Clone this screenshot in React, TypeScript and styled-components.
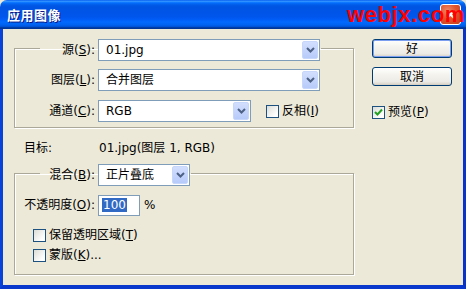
import React, { ReactElement, ReactNode } from 'react'
import styled, { createGlobalStyle } from 'styled-components'

const FONT = `'DejaVu Sans', 'Noto Sans CJK SC', sans-serif`

const GlobalStyle = createGlobalStyle`
  html, body {
    margin: 0;
    padding: 0;
    width: 466px;
    height: 289px;
    overflow: hidden;
    background: #ece9d8;
  }
`

const Window = styled.div`
  width: 466px;
  height: 289px;
  display: flex;
  flex-direction: column;
  font-family: ${FONT};
  font-size: 12px;
  color: #000;
`

const TitleBar = styled.div`
  position: relative;
  height: 29px;
  flex: none;
  display: flex;
  align-items: center;
  justify-content: space-between;
  padding: 0 5px 0 7px;
  box-sizing: border-box;
  border-radius: 7px 7px 0 0;
  background: linear-gradient(
    to bottom,
    #0058ee 0%,
    #3593ff 4%,
    #288eff 6%,
    #127dff 8%,
    #036ffc 10%,
    #0262ee 14%,
    #0057e5 20%,
    #0054e3 24%,
    #0055eb 56%,
    #005bf5 66%,
    #026afe 76%,
    #0062ef 86%,
    #0052d6 92%,
    #0040ab 94%,
    #003092 100%
  );
`

const TitleText = styled.span`
  color: #fff;
  font-family: 'Noto Sans CJK SC', sans-serif;
  font-weight: 700;
  font-size: 13px;
  line-height: 15px;
  text-shadow: 1px 1px 0 #0a1883;
  letter-spacing: 0.5px;
`

const CloseButton = styled.div`
  width: 21px;
  height: 21px;
  box-sizing: border-box;
  border: 1px solid #fff;
  border-radius: 3px;
  background: radial-gradient(circle at 35% 30%, #f08a6a 0%, #e2552c 45%, #c3401d 100%);
  display: flex;
  align-items: center;
  justify-content: center;
`

// site watermark stamped over the title bar
const Watermark = styled.span`
  position: absolute;
  left: 347px;
  top: 3px;
  color: #ff0000;
  font-family: 'Liberation Sans', Arial, sans-serif;
  font-weight: 700;
  font-size: 22px;
  line-height: 24px;
  letter-spacing: 0.6px;
`

const Frame = styled.div`
  flex: 1;
  display: flex;
  border-left: 3px solid #0842d8;
  border-right: 3px solid #0832c8;
  border-bottom: 4px solid #0838cc;
  background: #ece9d8;
  padding: 10px 11px 0 11px;
  gap: 18px;
`

const Main = styled.div`
  width: 340px;
  display: flex;
  flex-direction: column;
`

const Side = styled.div`
  width: 80px;
  display: flex;
  flex-direction: column;
`

const Group = styled.fieldset<{ $bottom: number }>`
  margin: 0;
  min-width: 0;
  padding: 0 0 ${(p) => p.$bottom}px 9px;
  border: 1px solid #aca899;
  box-shadow: inset 1px 1px 0 #fff, 1px 1px 0 #fff;
  display: flex;
  flex-direction: column;
`

const Legend = styled.legend<{ $indent: number }>`
  margin-left: ${(p) => p.$indent}px;
  padding: 0 1px 0 0;
  height: 18px;
  display: flex;
  align-items: flex-start;
`

const Row = styled.div<{ $indent?: number; $top: number }>`
  display: flex;
  align-items: center;
  padding-left: ${(p) => p.$indent || 0}px;
  margin-top: ${(p) => p.$top}px;
  height: 22px;
`

const Label = styled.span<{ $w: number }>`
  width: ${(p) => p.$w}px;
  margin-right: 3px;
  text-align: right;
  white-space: nowrap;
  line-height: 22px;
  flex: none;
`

const SelectBox = styled.div<{ $w: number }>`
  width: ${(p) => p.$w}px;
  height: 22px;
  box-sizing: border-box;
  border: 1px solid #7f9db9;
  background: #fff;
  display: flex;
  padding: 1px;
  flex: none;
`

const SelectText = styled.span`
  flex: 1;
  padding-left: 6px;
  line-height: 18px;
  white-space: nowrap;
  overflow: hidden;
`

const ArrowBox = styled.span`
  width: 16px;
  box-sizing: border-box;
  border: 1px solid #c7d6fb;
  border-radius: 2px;
  background: linear-gradient(to bottom, #d2defd, #b7cbfa);
  display: flex;
  align-items: center;
  justify-content: center;
`

const CheckWrap = styled.label<{ $left?: number; $top?: number }>`
  display: flex;
  align-items: center;
  margin-left: ${(p) => p.$left || 0}px;
  margin-top: ${(p) => p.$top || 0}px;
  height: 14px;
  line-height: 14px;
  white-space: nowrap;
`

const CheckBox = styled.span`
  width: 13px;
  height: 13px;
  box-sizing: border-box;
  border: 1px solid #1c5180;
  background: linear-gradient(135deg, #dcdcd7 0%, #fff 80%);
  margin-right: 3px;
  display: flex;
  align-items: center;
  justify-content: center;
  flex: none;
`

const TargetRow = styled.div`
  display: flex;
  padding-left: 10px;
  margin: 13px 0 9px;
  line-height: 14px;
`

const TargetLabel = styled.span`
  width: 75px;
`

const NumberInput = styled.div`
  width: 42px;
  height: 21px;
  box-sizing: border-box;
  border: 1px solid #7f9db9;
  background: #fff;
  padding: 2px 0 0 3px;
  flex: none;
`

const Selected = styled.span`
  display: inline-block;
  background: #316ac5;
  color: #fff;
  line-height: 14px;
  padding: 0 1px;
`

const Percent = styled.span`
  margin-left: 4px;
`

const Button = styled.div<{ $default?: boolean; $top?: number }>`
  height: 19px;
  margin-top: ${(p) => p.$top || 0}px;
  box-sizing: border-box;
  border: 1px solid #003c74;
  border-radius: 3px;
  background: linear-gradient(to bottom, #fff 0%, #f4f3ee 40%, #ecebe6 80%, #d6d0c5 100%);
  box-shadow: ${(p) =>
    p.$default ? 'inset 0 0 0 1px #7b9ef0' : 'inset 0 -1px 0 #d6d0c5'};
  display: flex;
  align-items: center;
  justify-content: center;
  line-height: 14px;
`

const Check = ({
  children,
  checked,
  left,
  top,
}: {
  children: ReactNode
  checked?: boolean
  left?: number
  top?: number
}): ReactElement => (
  <CheckWrap $left={left} $top={top}>
    <CheckBox>
      {checked && (
        <svg width="9" height="9" viewBox="0 0 9 9">
          <path d="M1 4 L3.5 6.5 L8 1.5" stroke="#21a121" strokeWidth="2" fill="none" />
        </svg>
      )}
    </CheckBox>
    {children}
  </CheckWrap>
)

const Select = ({ w, children }: { w: number; children: ReactNode }): ReactElement => (
  <SelectBox $w={w}>
    <SelectText>{children}</SelectText>
    <ArrowBox>
      <svg width="9" height="6" viewBox="0 0 9 6">
        <path d="M1 1 L4.5 4.5 L8 1" stroke="#4d6185" strokeWidth="2" fill="none" />
      </svg>
    </ArrowBox>
  </SelectBox>
)

const App = (): ReactElement => {
  return (
    <Window>
      <GlobalStyle />
      <TitleBar>
        <TitleText>应用图像</TitleText>
        <CloseButton>
          <svg width="11" height="11" viewBox="0 0 11 11">
            <path d="M2 2 L9 9 M9 2 L2 9" stroke="#fff" strokeWidth="2" />
          </svg>
        </CloseButton>
        <Watermark>webjx.com</Watermark>
      </TitleBar>

      <Frame>
        <Main>
          <Group $bottom={5}>
            <Legend $indent={16}>
              <Label $w={55}>
                源(<u>S</u>):
              </Label>
              <Select w={222}>01.jpg</Select>
            </Legend>
            <Row $indent={16} $top={12}>
              <Label $w={55}>
                图层(<u>L</u>):
              </Label>
              <Select w={222}>合并图层</Select>
            </Row>
            <Row $indent={16} $top={9}>
              <Label $w={55}>
                通道(<u>C</u>):
              </Label>
              <Select w={153}>RGB</Select>
              <Check left={15}>
                反相(<u>I</u>)
              </Check>
            </Row>
          </Group>

          <TargetRow>
            <TargetLabel>目标:</TargetLabel>
            <span>01.jpg(图层 1, RGB)</span>
          </TargetRow>

          <Group $bottom={12}>
            <Legend $indent={16}>
              <Label $w={55}>
                混合(<u>B</u>):
              </Label>
              <Select w={92}>正片叠底</Select>
            </Legend>
            <Row $top={12}>
              <Label $w={71}>
                不透明度(<u>O</u>):
              </Label>
              <NumberInput>
                <Selected>100</Selected>
              </NumberInput>
              <Percent>%</Percent>
            </Row>
            <Check left={9} top={12}>
              保留透明区域(<u>T</u>)
            </Check>
            <Check left={9} top={6}>
              蒙版(<u>K</u>)...
            </Check>
          </Group>
        </Main>

        <Side>
          <Button $default>好</Button>
          <Button $top={9}>取消</Button>
          <Check top={19} checked>
            预览(<u>P</u>)
          </Check>
        </Side>
      </Frame>
    </Window>
  )
}

export default App
